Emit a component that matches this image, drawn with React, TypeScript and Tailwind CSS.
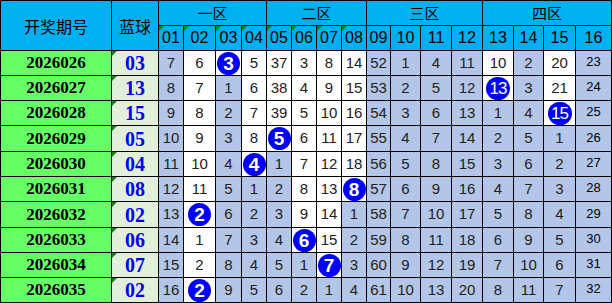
import React from "react";

interface Draw {
  period: string;
  blue: string;
  nums: number[];
  hit: number; // column index of the drawn number
}

const draws: Draw[] = [
  { period: "2026026", blue: "03", hit: 2, nums: [7, 6, 3, 5, 37, 3, 8, 14, 52, 1, 4, 11, 10, 2, 20, 23] },
  { period: "2026027", blue: "13", hit: 12, nums: [8, 7, 1, 6, 38, 4, 9, 15, 53, 2, 5, 12, 13, 3, 21, 24] },
  { period: "2026028", blue: "15", hit: 14, nums: [9, 8, 2, 7, 39, 5, 10, 16, 54, 3, 6, 13, 1, 4, 15, 25] },
  { period: "2026029", blue: "05", hit: 4, nums: [10, 9, 3, 8, 5, 6, 11, 17, 55, 4, 7, 14, 2, 5, 1, 26] },
  { period: "2026030", blue: "04", hit: 3, nums: [11, 10, 4, 4, 1, 7, 12, 18, 56, 5, 8, 15, 3, 6, 2, 27] },
  { period: "2026031", blue: "08", hit: 7, nums: [12, 11, 5, 1, 2, 8, 13, 8, 57, 6, 9, 16, 4, 7, 3, 28] },
  { period: "2026032", blue: "02", hit: 1, nums: [13, 2, 6, 2, 3, 9, 14, 1, 58, 7, 10, 17, 5, 8, 4, 29] },
  { period: "2026033", blue: "06", hit: 5, nums: [14, 1, 7, 3, 4, 6, 15, 2, 59, 8, 11, 18, 6, 9, 5, 30] },
  { period: "2026034", blue: "07", hit: 6, nums: [15, 2, 8, 4, 5, 1, 7, 3, 60, 9, 12, 19, 7, 10, 6, 31] },
  { period: "2026035", blue: "02", hit: 1, nums: [16, 2, 9, 5, 6, 2, 1, 4, 61, 10, 13, 20, 8, 11, 7, 32] },
];

const cols = Array.from({ length: 16 }, (_, i) => String(i + 1).padStart(2, "0"));
const zones = ["一区", "二区", "三区", "四区"];

// last row where each column was hit; cells up to it stay white
const lastHit = cols.map((_, c) => {
  let last = -1;
  draws.forEach((d, r) => {
    if (d.hit === c) last = r;
  });
  return last;
});

const cjk = "font-['Noto_Sans_CJK_SC','Noto_Sans',sans-serif]";

function Tick() {
  return (
    <span className="absolute left-0 top-0 w-[5px] h-[5px] bg-[#1b7d1b] [clip-path:polygon(0_0,100%_0,0_100%)]" />
  );
}

function Ball({ n }: { n: number }) {
  return n < 10 ? (
    <span className="flex items-center justify-center w-[23px] h-[23px] rounded-full bg-[#0000ff] text-white font-bold text-[19px] leading-none">
      {n}
    </span>
  ) : (
    <span className="flex items-center justify-center w-[24px] h-[23px] rounded-full bg-[#0000ff] text-white text-[17px] tracking-[-1px] leading-none">
      {n}
    </span>
  );
}

export default function App() {
  return (
    <div className="w-[612px] h-[303px] bg-white font-['Liberation_Sans',Arial,sans-serif]">
      <div className="grid w-[612px] h-[303px] gap-px p-px bg-black grid-cols-[110px_46px_24px_31px_25px_24px_24px_24px_24px_24px_23px_29px_30px_30px_30px_29px_31px_35px] grid-rows-[24px_24px_24px_24px_24px_25px_24px_24px_25px_24px_24px_24px]">
        {/* header */}
        <div className={`row-span-2 bg-[#00b0f0] flex items-center justify-center text-[16px] text-black ${cjk}`}>
          开奖期号
        </div>
        <div className={`row-span-2 bg-[#00b0f0] flex items-center justify-center text-[16px] text-black ${cjk}`}>
          蓝球
        </div>
        {zones.map((z) => (
          <div
            key={z}
            className={`col-span-4 bg-[#00b0f0] flex items-center justify-center text-[15px] text-black ${cjk}`}
          >
            {z}
          </div>
        ))}
        {cols.map((c, i) => (
          <div
            key={c}
            className="relative bg-[#00b0f0] flex items-center justify-center text-[16px] text-black"
          >
            {i < 8 && <Tick />}
            {c}
          </div>
        ))}

        {/* rows */}
        {draws.map((d, r) => (
          <React.Fragment key={d.period}>
            <div className="bg-[#66ff66] flex items-center justify-center font-['Liberation_Serif',serif] font-bold text-[17px] text-black">
              {d.period}
            </div>
            <div className="relative bg-[#e2efda] flex items-center justify-center font-['Liberation_Serif',serif] font-bold text-[20px] text-[#0000ff]">
              <Tick />
              {d.blue}
            </div>
            {d.nums.map((n, c) => (
              <div
                key={c}
                className={`flex items-center justify-center ${
                  r <= lastHit[c] ? "bg-white" : "bg-[#b4c6e7]"
                } ${c === 15 ? "text-[13px] text-black pb-[2px]" : "text-[15px] text-[#222]"}`}
              >
                {c === d.hit ? <Ball n={n} /> : n}
              </div>
            ))}
          </React.Fragment>
        ))}
      </div>
    </div>
  );
}
